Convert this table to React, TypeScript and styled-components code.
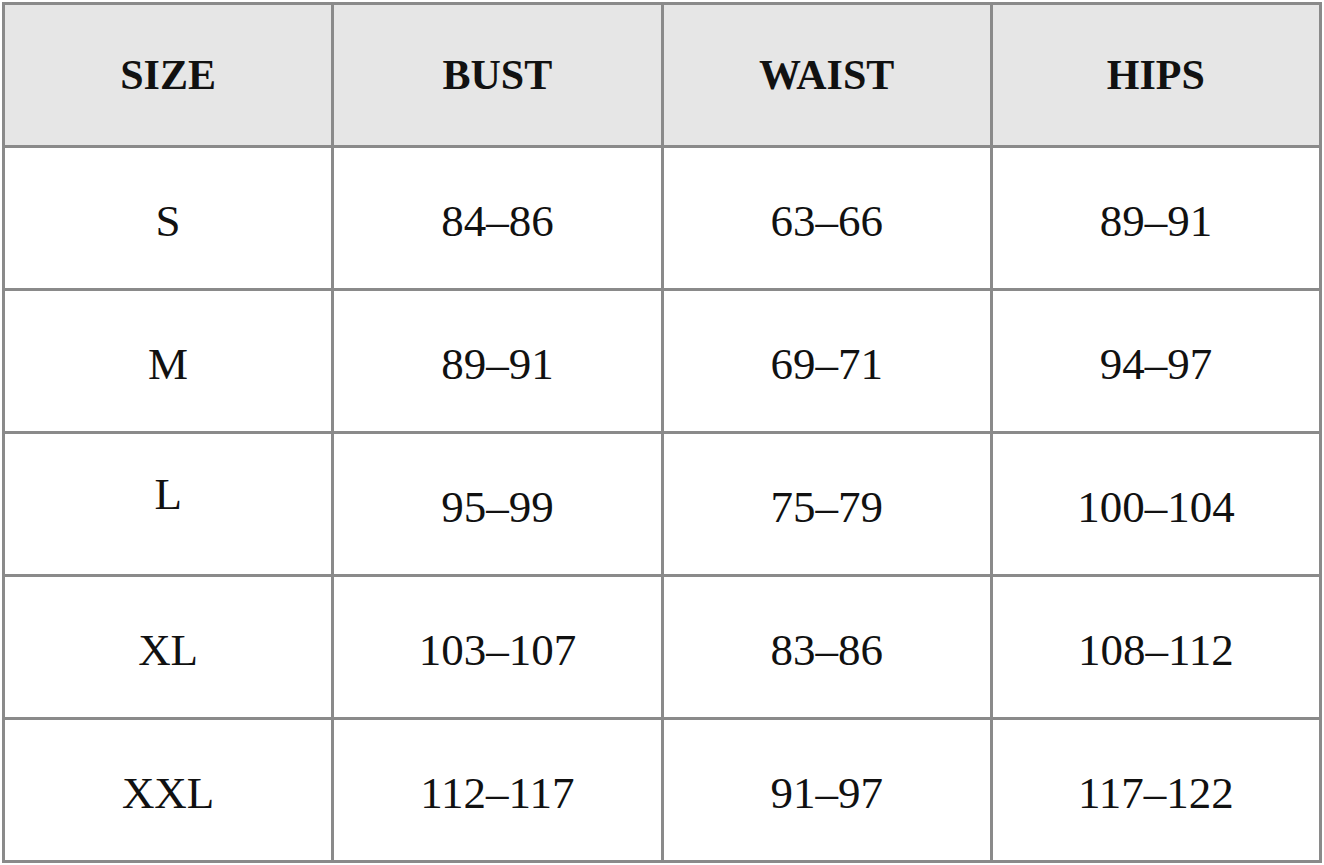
import React from 'react';
import styled, { createGlobalStyle } from 'styled-components';

const GlobalStyle = createGlobalStyle`
  html, body {
    margin: 0;
    padding: 0;
    background: #ffffff;
  }
`;

const Page = styled.div`
  padding: 2px;
  width: 1320px;
`;

const Table = styled.table`
  width: 1320px;
  border-collapse: collapse;
  table-layout: fixed;
  font-family: "Liberation Serif", "Times New Roman", serif;
  color: #111;
  border: 3px solid #8a8a8a;
`;

const HeadCell = styled.th`
  height: 140px;
  padding: 0;
  background: #e6e6e6;
  border: 3px solid #8a8a8a;
  font-size: 42px;
  font-weight: 700;
  text-align: center;
  vertical-align: middle;
`;

const Cell = styled.td<{ $lift?: boolean }>`
  height: ${(p) => (p.$lift ? '120px' : '134px')};
  padding: ${(p) => (p.$lift ? '0 0 20px' : '6px 0 0')};
  border: 3px solid #8a8a8a;
  font-size: 45px;
  text-align: center;
  vertical-align: middle;
`;

const headers = ['SIZE', 'BUST', 'WAIST', 'HIPS'];

const rows = [
  ['S', '84–86', '63–66', '89–91'],
  ['M', '89–91', '69–71', '94–97'],
  ['L', '95–99', '75–79', '100–104'],
  ['XL', '103–107', '83–86', '108–112'],
  ['XXL', '112–117', '91–97', '117–122'],
];

const App: React.FC = () => {
  return (
    <Page>
      <GlobalStyle />
      <Table>
        <thead>
          <tr>
            {headers.map((h) => (
              <HeadCell key={h}>{h}</HeadCell>
            ))}
          </tr>
        </thead>
        <tbody>
          {rows.map((row) => (
            <tr key={row[0]}>
              {row.map((value, i) => (
                <Cell key={i} $lift={i === 0 && row[0] === 'L'}>
                  {value}
                </Cell>
              ))}
            </tr>
          ))}
        </tbody>
      </Table>
    </Page>
  );
};

export default App;
